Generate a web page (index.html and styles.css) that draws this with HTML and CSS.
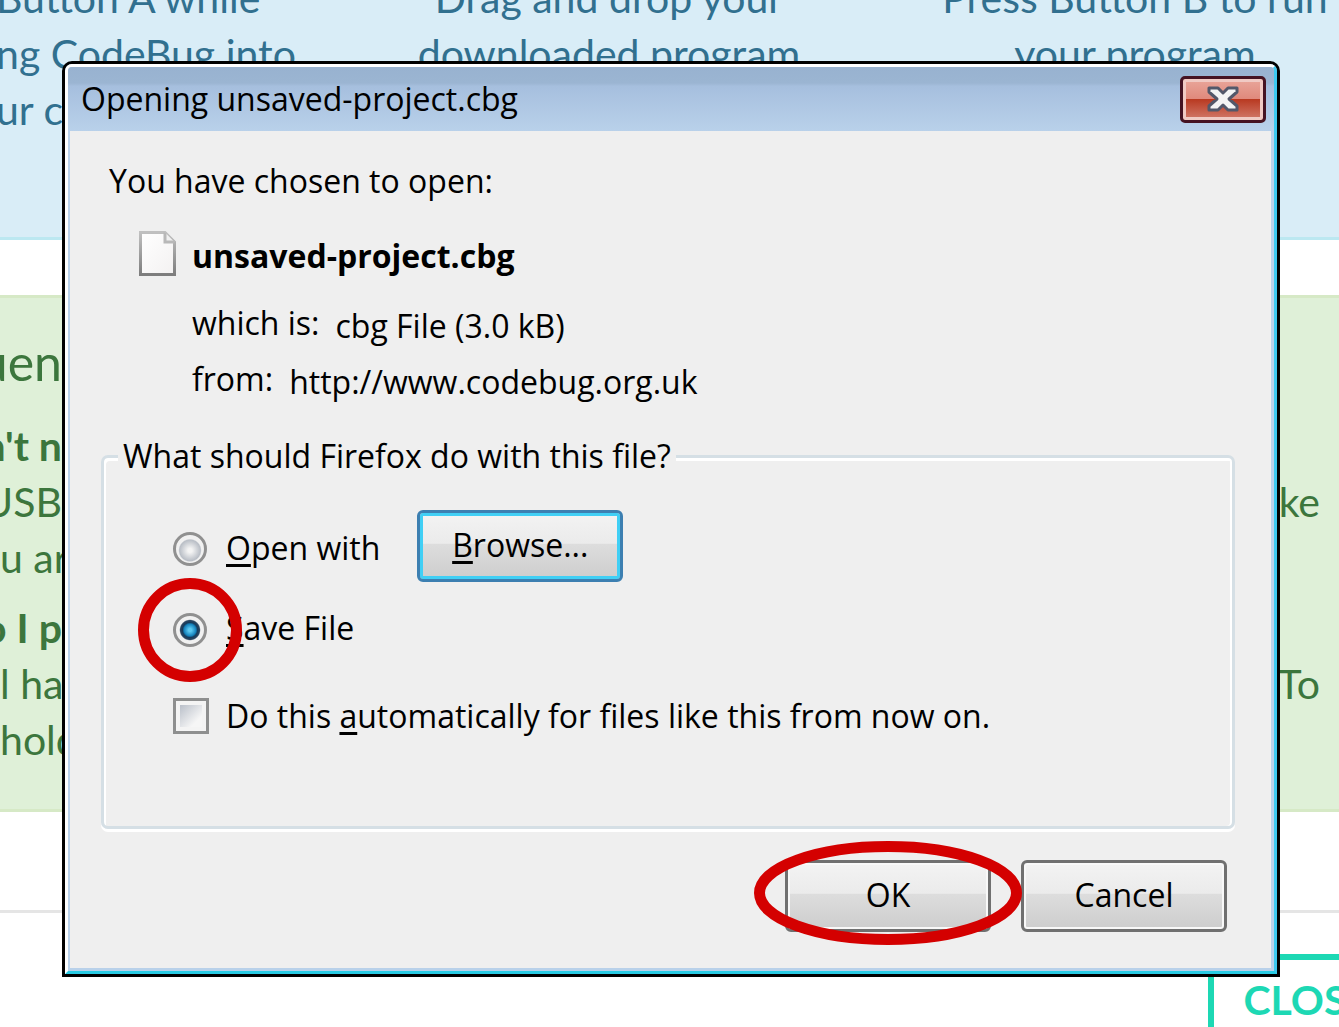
FILE: index.html
```
<!DOCTYPE html>
<html lang="en">
<head>
    <meta charset="UTF-8">
    <meta name="viewport" content="width=device-width, initial-scale=1.0">
    <title>Opening unsaved-project.cbg</title>
    <link rel="stylesheet" href="styles.css">
</head>
<body>
    <main class="page">
        <section class="steps">
            <p class="first">Button A while<br>ng CodeBug into<br>ur c</p>
            <p>Drag and drop your<br>downloaded program</p>
            <p>Press Button B to run<br>your program</p>
        </section>

        <section class="faq">
            <h2><span class="left">uen</span></h2>
            <h3><span class="left">n't n</span></h3>
            <p><span class="left">USB</span><span>ke</span></p>
            <p><span>u ar</span></p>
            <h3 class="next"><span class="left">o I p</span></h3>
            <p><span>l hav</span><span>To</span></p>
            <p><span>hold</span></p>
        </section>

        <footer class="page-footer">
            <button type="button" class="close-page">CLOSE</button>
        </footer>
    </main>

    <div class="dialog" role="dialog" aria-labelledby="dialogTitle">
        <div class="frame">
            <header class="titlebar">
                <h1 id="dialogTitle">Opening unsaved-project.cbg</h1>
                <button type="button" class="close" aria-label="Close">
                    <svg width="32" height="26" viewBox="0 0 32 26">
                        <path d="M2 2H11L16 7L21 2H30V6L22 13L30 20V24H21L16 19L11 24H2V20L10 13L2 6Z" fill="#f4f4f4" stroke="#53586a" stroke-width="3" stroke-linejoin="round"/>
                    </svg>
                </button>
            </header>

            <form class="content">
                <p class="intro">You have chosen to open:</p>
                <div class="file">
                    <svg width="37" height="45" viewBox="0 0 37 45">
                        <defs>
                            <linearGradient id="paper" x1="0" y1="0" x2="1" y2="1">
                                <stop offset="0" stop-color="#ffffff"/>
                                <stop offset="1" stop-color="#f3f1f1"/>
                            </linearGradient>
                            <linearGradient id="edge" x1="0" y1="0" x2="0" y2="1">
                                <stop offset="0" stop-color="#c0c0c0"/>
                                <stop offset="1" stop-color="#7d7d7d"/>
                            </linearGradient>
                        </defs>
                        <path d="M1.500 1.500H26L35.500 11V43.500H1.500Z" fill="url(#paper)" stroke="url(#edge)" stroke-width="3"/>
                        <path d="M26 1.500V11H35.500" fill="#f0f0f0" stroke="#b8b8b8" stroke-width="3"/>
                    </svg>
                    <strong>unsaved-project.cbg</strong>
                </div>
                <div class="detail"><span>which is:</span><span class="value">cbg File (3.0 kB)</span></div>
                <div class="detail"><span>from:</span><span class="value">http://www.codebug.org.uk</span></div>

                <fieldset>
                    <legend>What should Firefox do with this file?</legend>
                    <div class="option open">
                        <input type="radio" name="action" id="openWith">
                        <label for="openWith"><u>O</u>pen with</label>
                        <button type="button" class="btn focused"><span><u>B</u>rowse...</span></button>
                    </div>
                    <div class="option save">
                        <span class="marked">
                            <input type="radio" name="action" id="saveFile" checked>
                            <svg class="ring" width="104" height="104" viewBox="0 0 104 104">
                                <circle cx="52" cy="52" r="46.500"/>
                            </svg>
                        </span>
                        <label for="saveFile"><u>S</u>ave File</label>
                    </div>
                    <div class="option auto">
                        <input type="checkbox" id="automatic">
                        <label for="automatic">Do this <u>a</u>utomatically for files like this from now on.</label>
                    </div>
                </fieldset>

                <div class="actions">
                    <span class="marked">
                        <button type="button" class="btn">OK</button>
                        <svg class="ring" width="268" height="104" viewBox="0 0 268 104">
                            <ellipse cx="134" cy="52" rx="128.500" ry="46.500"/>
                        </svg>
                    </span>
                    <button type="button" class="btn">Cancel</button>
                </div>
            </form>
        </div>
    </div>
</body>
</html>
```
FILE: styles.css
```
* { box-sizing: border-box; }
body { margin: 0; height: 100vh; overflow: hidden; position: relative; background: #fff; font-family: "Open Sans", "Noto Sans", sans-serif; }
h1, h2, h3, p { margin: 0; font-weight: normal; }

/* page behind the dialog */
.page { height: 100vh; overflow: hidden; font-family: Lato, sans-serif; font-size: 41px; line-height: 56px; white-space: nowrap; }
.steps { display: grid; grid-template-columns: 346px 1fr 1fr; margin: -30px -59px 0 0; padding-bottom: 99px; border-bottom: 3px solid #bce8f1; background: #d9edf7; color: #31708f; text-align: center; }
.steps .first { margin-left: -4px; text-align: left; }
.faq { margin-top: 55px; padding: 36px 19px 41px 0; border: solid #d6e9c6; border-width: 3px 0; background: #dff0d8; color: #3c763d; }
.faq h2, .faq h3, .faq p { display: flex; justify-content: space-between; font-size: 41px; }
.faq h2 { margin-bottom: 28px; font-size: 50px; }
.faq h3 { font-weight: bold; }
.faq .next { margin-top: 14px; }
.faq .left { display: flex; justify-content: flex-end; width: 62px; white-space: pre; }
.page-footer { display: flex; justify-content: flex-end; margin: 98px -59px 0 0; padding-top: 41px; border-top: 3px solid #e5e5e5; }
.close-page { height: 90px; padding: 0 22px 0 29px; border: 6px solid #1dd8b4; background: #fff; color: #1dd8b4; font: bold 41px Lato, sans-serif; }

/* dialog window */
.dialog { position: absolute; top: 61px; left: 62px; right: 59px; border: 3px solid #000; border-radius: 10px 10px 0 0; background: #b9d1ea; color: #000; font-size: 32px; line-height: 40px; }
.frame { padding: 0 3px 3px 2px; border: 3px solid #fff; border-right-color: #3dc9f0; border-bottom-color: #28cbe4; border-radius: 7px 7px 0 0; }
.titlebar { display: flex; justify-content: space-between; align-items: center; height: 64px; margin: 0 -3px 0 -2px; padding: 0 8px 0 13px; border-radius: 4px 4px 0 0; background: linear-gradient(#98b2d0, #9bb5d2 25%, #a6bfde 30%, #b9d1ea); }
.titlebar h1 { font-size: 32px; }
.close { display: flex; align-items: center; justify-content: center; width: 86px; height: 47px; padding: 0; border: 3px solid #451322; border-radius: 5px; background: linear-gradient(#e9a79b, #e0897c 48%, #b93a22 50%, #d27b6c); box-shadow: inset 0 0 0 3px #f0cac4; }
.content { padding: 30px 36px 36px 31px; background: #efefef; }
.intro { padding-left: 8px; }
.file { display: flex; align-items: flex-start; gap: 16px; margin: 30px 0 14px; padding-left: 38px; line-height: 50px; }
.detail { display: flex; gap: 16px; padding-left: 91px; line-height: 56px; }
.value { padding-top: 3px; height: 56px; }

fieldset { min-width: 0; margin: 29px 0 0; padding: 0 0 90px 69px; border: 3px solid #d5dfe5; border-radius: 7px; box-shadow: inset 2px 3px #fff, inset -2px 0 #fff, 0 3px #fff; }
legend { margin-left: -55px; padding: 0 5px; background: #efefef; }
.option { display: flex; align-items: center; gap: 19px; }
.open { margin-top: 34px; }
.open label { padding-top: 4px; }
.open .btn { margin-left: 18px; }
.save { margin-top: 26px; }
.save label { padding-bottom: 4px; }
.auto { gap: 17px; margin-top: 44px; }
u { text-decoration-thickness: 3px; text-underline-offset: 4px; text-decoration-skip-ink: none; }

input { appearance: none; flex: none; margin: 0; }
input[type="radio"] { width: 34px; height: 34px; border: 3px solid #909090; border-radius: 50%; background: radial-gradient(circle at 50% 55%, #f4f4f4 10%, #b9bec6 50%, #f1f1f1 56%); }
input[type="radio"]:checked { background: radial-gradient(circle, #5cc8f0 8%, #1583bd 30%, #173b5c 38%, #2a4560 48%, #f1f1f1 54%); }
input[type="checkbox"] { width: 36px; height: 36px; border: 3px solid #8e8f8f; background: linear-gradient(135deg, #b9bfc9, #f6f6f6 75%) content-box, #f4f4f4; padding: 4px; }
.open input { margin-top: 6px; }

.btn { width: 206px; height: 72px; padding: 0 0 3px; border: 3px solid #707070; border-radius: 6px; background: linear-gradient(#f3f3f3, #ebebeb 46%, #dddddd 47%, #cdcdcd); box-shadow: inset 0 0 0 2px #f8f8f8; color: #000; font: inherit; }
.focused { border-color: #3c7fb1; box-shadow: inset 0 0 0 3px #40cff5; }
.actions { display: flex; justify-content: flex-end; gap: 30px; margin-top: 31px; padding-right: 8px; }
.marked { position: relative; display: flex; }

/* red markers drawn over the controls to use */
.ring { position: absolute; top: 50%; left: 50%; transform: translate(-50%, -50%); fill: none; stroke: #d40000; stroke-width: 11px; pointer-events: none; }
.actions .ring { top: 33px; }
```
